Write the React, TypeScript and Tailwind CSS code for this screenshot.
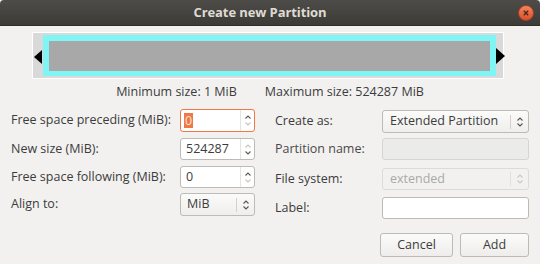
import React from "react";

const font = { fontFamily: '"Open Sans", "Noto Sans", "DejaVu Sans", sans-serif' };

function SpinArrows({ upDim, downDim }: { upDim?: boolean; downDim?: boolean }) {
  return (
    <div className="flex w-[14px] flex-col items-center justify-center gap-[3px] border-l border-[#e4e3e1] h-full">
      <svg width="6" height="4" viewBox="0 0 6 4">
        <path d="M0.5 3.5 L3 1 L5.5 3.5" fill="none" stroke={upDim ? "#c4c4c4" : "#5a5a5a"} strokeWidth="1.1" />
      </svg>
      <svg width="6" height="4" viewBox="0 0 6 4">
        <path d="M0.5 0.5 L3 3 L5.5 0.5" fill="none" stroke={downDim ? "#c4c4c4" : "#5a5a5a"} strokeWidth="1.1" />
      </svg>
    </div>
  );
}

function ComboArrows({ dim }: { dim?: boolean }) {
  return (
    <div className="flex h-full items-center">
      <div className={`h-[14px] w-px ${dim ? "bg-[#e0dfdd]" : "bg-[#d2d1cf]"}`} />
      <div className="flex w-[17px] flex-col items-center justify-center gap-[2px]">
        <svg width="6" height="4" viewBox="0 0 6 4">
          <path d="M0.5 3.5 L3 1 L5.5 3.5" fill="none" stroke={dim ? "#c8c8c8" : "#555"} strokeWidth="1.1" />
        </svg>
        <svg width="6" height="4" viewBox="0 0 6 4">
          <path d="M0.5 0.5 L3 3 L5.5 0.5" fill="none" stroke={dim ? "#c8c8c8" : "#555"} strokeWidth="1.1" />
        </svg>
      </div>
    </div>
  );
}

export default function App() {
  return (
    <div className="w-[540px] h-[264px] bg-[#f2f1f0] text-[#3c3c3c] overflow-hidden flex flex-col text-[12.5px]" style={font}>
      {/* title bar */}
      <div className="relative h-[26px] shrink-0 rounded-t-[4px] bg-gradient-to-b from-[#4d4c48] to-[#3c3b37] border-b border-[#2f2e2b] flex items-center justify-center pr-[20px]">
        <span className="text-[13px] font-bold text-[#dfdbd2] tracking-[-0.1px]">Create new Partition</span>
        <div className="absolute right-[6px] top-[5px] h-[16px] w-[16px] rounded-full bg-gradient-to-b from-[#f3845f] to-[#d8502a] border border-[#a8401f] flex items-center justify-center">
          <svg width="6" height="6" viewBox="0 0 6 6">
            <path d="M0.8 0.8 L5.2 5.2 M5.2 0.8 L0.8 5.2" stroke="#4a2418" strokeWidth="1.3" />
          </svg>
        </div>
      </div>

      {/* partition graphic */}
      <div className="relative ml-[32px] mt-[6px] w-[472px] h-[47px] border border-white bg-[#d9d9d9] pl-[10px] pr-[7px] pt-[2px] pb-[2px]">
        <div className="h-full w-full bg-[#7ff5f5] p-[6px] pb-[5px] pr-[6px]">
          <div className="h-full w-full bg-[#a8a8a8]" />
        </div>
        <svg className="absolute left-[1px] top-[17px]" width="9" height="14" viewBox="0 0 9 14">
          <path d="M8 0 L0 7 L8 14 Z" fill="#000" />
        </svg>
        <svg className="absolute right-[-2px] top-[15px]" width="9" height="16" viewBox="0 0 9 16">
          <path d="M0 0 L9 8 L0 16 Z" fill="#000" />
        </svg>
      </div>

      {/* size labels */}
      <div className="mt-[4px] flex justify-center gap-[28px] leading-[18px]">
        <span>Minimum size: 1 MiB</span>
        <span>Maximum size: 524287 MiB</span>
      </div>

      {/* form */}
      <div className="mt-[8px] flex">
        <div className="ml-[11px] w-[244px] flex flex-col">
          <div className="flex items-center h-[23px]">
            <span className="w-[169px]">Free space preceding (MiB):</span>
            <div className="flex h-[23px] w-[75px] items-center rounded-[3px] border border-[#f07746] bg-white">
              <div className="flex-1 pl-[3px] flex items-center">
                <span className="bg-[#f07746] text-[#fde2d6] leading-[15px] px-[1px]">0</span>
              </div>
              <SpinArrows downDim />
            </div>
          </div>
          <div className="flex items-center h-[22px] mt-[6px]">
            <span className="w-[169px]">New size (MiB):</span>
            <div className="flex h-[22px] w-[75px] items-center rounded-[3px] border border-[#bcbbb8] bg-white">
              <div className="flex-1 pl-[5px]">524287</div>
              <SpinArrows upDim />
            </div>
          </div>
          <div className="flex items-center h-[22px] mt-[6px]">
            <span className="w-[169px]">Free space following (MiB):</span>
            <div className="flex h-[22px] w-[75px] items-center rounded-[3px] border border-[#bcbbb8] bg-white">
              <div className="flex-1 pl-[5px]">0</div>
              <SpinArrows downDim />
            </div>
          </div>
          <div className="flex items-center h-[23px] mt-[5px]">
            <span className="w-[169px]">Align to:</span>
            <div className="flex h-[23px] w-[75px] items-center rounded-[3px] border border-[#bcbbb8] bg-gradient-to-b from-[#fbfbfa] to-[#efeeec]">
              <div className="flex-1 pl-[6px]">MiB</div>
              <ComboArrows />
            </div>
          </div>
        </div>

        <div className="ml-[20px] flex flex-col">
          <div className="flex items-center h-[23px] mt-[1px]">
            <span className="w-[107px]">Create as:</span>
            <div className="flex h-[23px] w-[147px] items-center rounded-[3px] border border-[#bcbbb8] bg-gradient-to-b from-[#fbfbfa] to-[#efeeec]">
              <div className="flex-1 pl-[7px]">Extended Partition</div>
              <ComboArrows />
            </div>
          </div>
          <div className="flex items-center h-[22px] mt-[5px]">
            <span className="w-[107px] text-[#4a4a4a]">Partition name:</span>
            <div className="h-[22px] w-[147px] rounded-[3px] border border-[#d6d5d3] bg-[#ebebea]" />
          </div>
          <div className="flex items-center h-[22px] mt-[8px]">
            <span className="w-[107px]">File system:</span>
            <div className="flex h-[22px] w-[147px] items-center rounded-[3px] border border-[#dcdbd9] bg-[#f2f1f0]">
              <div className="flex-1 pl-[7px] text-[#a9a9a7]">extended</div>
              <ComboArrows dim />
            </div>
          </div>
          <div className="flex items-center h-[22px] mt-[7px]">
            <span className="w-[107px]">Label:</span>
            <div className="h-[22px] w-[147px] rounded-[3px] border border-[#bcbbb8] bg-white" />
          </div>
        </div>
      </div>

      {/* buttons */}
      <div className="mt-[14px] flex justify-end gap-[7px] pr-[11px]">
        <button className="h-[24px] w-[73px] rounded-[3px] border border-[#bcbbb8] bg-gradient-to-b from-[#fbfbfa] to-[#eeedeb]">Cancel</button>
        <button className="h-[24px] w-[69px] rounded-[3px] border border-[#bcbbb8] bg-gradient-to-b from-[#fbfbfa] to-[#eeedeb]">Add</button>
      </div>
    </div>
  );
}
